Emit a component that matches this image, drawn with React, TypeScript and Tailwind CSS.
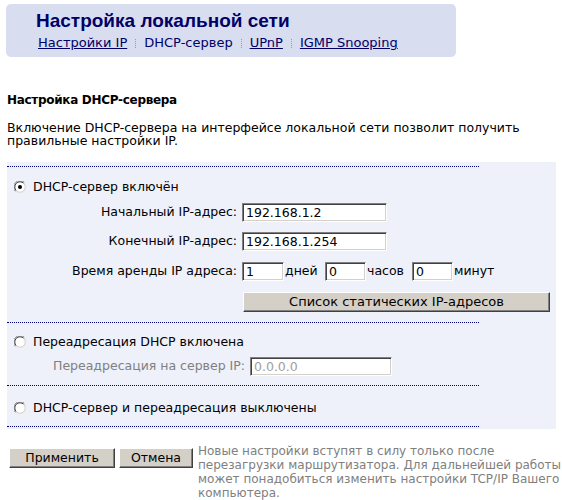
const font = { fontFamily: "'DejaVu Sans', Verdana, sans-serif" };

function Radio({ checked }: { checked?: boolean }) {
  return (
    <svg width="12" height="12" viewBox="0 0 12 12" className="shrink-0">
      <circle cx="6" cy="6" r="5.5" fill="#fff" />
      <path d="M1.5 10.5 A6 6 0 0 1 10.5 1.5" fill="none" stroke="#808080" strokeWidth="1" />
      <path d="M2.3 9.7 A5 5 0 0 1 9.7 2.3" fill="none" stroke="#404040" strokeWidth="1" />
      <path d="M10.5 1.5 A6 6 0 0 1 1.5 10.5" fill="none" stroke="#e8e8e8" strokeWidth="1" />
      <path d="M9.7 2.3 A5 5 0 0 1 2.3 9.7" fill="none" stroke="#d4d0c8" strokeWidth="1" />
      {checked && <circle cx="6" cy="6" r="2" fill="#000" />}
    </svg>
  );
}

function Field({ value, w, disabled }: { value: string; w: string; disabled?: boolean }) {
  return (
    <div
      className={`${w} shrink-0 h-[19px] bg-white border border-t-[#808080] border-l-[#808080] border-b-white border-r-white shadow-[inset_1px_1px_0_#404040,inset_-1px_-1px_0_#d4d0c8] pl-[3px] text-[12.5px] leading-[17px] ${disabled ? "text-[#a0a0a0]" : "text-black"}`}
    >
      {value}
    </div>
  );
}

function Btn({ children, w, size = "text-[12.5px]" }: { children: string; w: string; size?: string }) {
  return (
    <div
      className={`${w} ${size} shrink-0 h-[20px] bg-[#d4d0c8] border border-t-white border-l-white border-b-[#404040] border-r-[#404040] shadow-[inset_-1px_-1px_0_#808080] flex items-center justify-center text-black`}
    >
      {children}
    </div>
  );
}

function Dots() {
  return <div className="w-[472px] border-t border-dotted border-[#000080]" />;
}

function Sep() {
  return <span className="mx-[8px] inline-block h-[9px] border-l border-dotted border-[#999]" />;
}

export default function App() {
  return (
    <div className="w-[562px] h-[500px] bg-white text-[12.5px] text-black overflow-hidden" style={font}>
      <div className="ml-[6px] mt-[4px] w-[450px] h-[53px] rounded-[5px] bg-[#d8ddf0] pt-[6px]">
        <div
          className="pl-[30px] text-[19px] leading-[22px] font-bold text-[#000066]"
          style={{ fontFamily: "Arial, 'Liberation Sans', sans-serif" }}
        >
          Настройка локальной сети
        </div>
        <div className="pl-[32px] mt-[4px] flex items-center text-[#000066] leading-[14px] text-[13px]">
          <span className="underline">Настройки IP</span>
          <Sep />
          <span>DHCP-сервер</span>
          <Sep />
          <span className="underline">UPnP</span>
          <Sep />
          <span className="underline">IGMP Snooping</span>
        </div>
      </div>

      <div className="ml-[7px] mt-[36px] text-[12px] tracking-[-0.3px] font-bold leading-[14px]">Настройка DHCP-сервера</div>
      <div className="ml-[7px] mt-[14px] w-[530px] leading-[13px]">
        Включение DHCP-сервера на интерфейсе локальной сети позволит получить правильные настройки IP.
      </div>

      <div className="ml-[7px] mt-[15px] w-[549px] h-[267px] bg-[#eef1fa] pt-[4px]">
        <Dots />
        <div className="flex items-center gap-[7px] pl-[7px] mt-[13px] h-[14px]">
          <Radio checked />
          <span>DHCP-сервер включён</span>
        </div>
        <div className="flex items-center mt-[9px]">
          <span className="w-[235px] shrink-0 text-right pr-[5px]">Начальный IP-адрес:</span>
          <Field value="192.168.1.2" w="w-[145px]" />
        </div>
        <div className="flex items-center mt-[10px]">
          <span className="w-[235px] shrink-0 text-right pr-[5px]">Конечный IP-адрес:</span>
          <Field value="192.168.1.254" w="w-[145px]" />
        </div>
        <div className="flex items-center mt-[11px]">
          <span className="w-[235px] shrink-0 text-right pr-[5px]">Время аренды IP адреса:</span>
          <Field value="1" w="w-[42px]" />
          <span className="ml-[1px] w-[40px] shrink-0">дней</span>
          <Field value="0" w="w-[41px]" />
          <span className="ml-[1px] w-[45px] shrink-0">часов</span>
          <Field value="0" w="w-[41px]" />
          <span className="ml-[1px]">минут</span>
        </div>
        <div className="flex mt-[11px] pl-[236px]">
          <Btn w="w-[307px]" size="text-[13px]">Список статических IP-адресов</Btn>
        </div>
        <div className="mt-[10px]">
          <Dots />
        </div>
        <div className="flex items-center gap-[7px] pl-[7px] mt-[12px] h-[14px]">
          <Radio />
          <span>Переадресация DHCP включена</span>
        </div>
        <div className="flex items-center mt-[8px] text-[#808080]">
          <span className="w-[243px] shrink-0 text-right pr-[5px]">Переадресация на сервер IP:</span>
          <Field value="0.0.0.0" w="w-[142px]" disabled />
        </div>
        <div className="mt-[9px]">
          <Dots />
        </div>
        <div className="flex items-center gap-[7px] pl-[7px] mt-[15px] h-[14px]">
          <Radio />
          <span>DHCP-сервер и переадресация выключены</span>
        </div>
        <div className="mt-[11px]">
          <Dots />
        </div>
      </div>

      <div className="flex items-start ml-[9px] mt-[19px]">
        <Btn w="w-[106px]">Применить</Btn>
        <div className="ml-[4px]">
          <Btn w="w-[74px]">Отмена</Btn>
        </div>
        <div className="ml-[5px] whitespace-nowrap text-[#808080] text-[12px] leading-[14px] -mt-[4px]">
          Новые настройки вступят в силу только после
          <br />
          перезагрузки маршрутизатора. Для дальнейшей работы
          <br />
          может понадобиться изменить настройки TCP/IP Вашего
          <br />
          компьютера.
        </div>
      </div>
    </div>
  );
}
